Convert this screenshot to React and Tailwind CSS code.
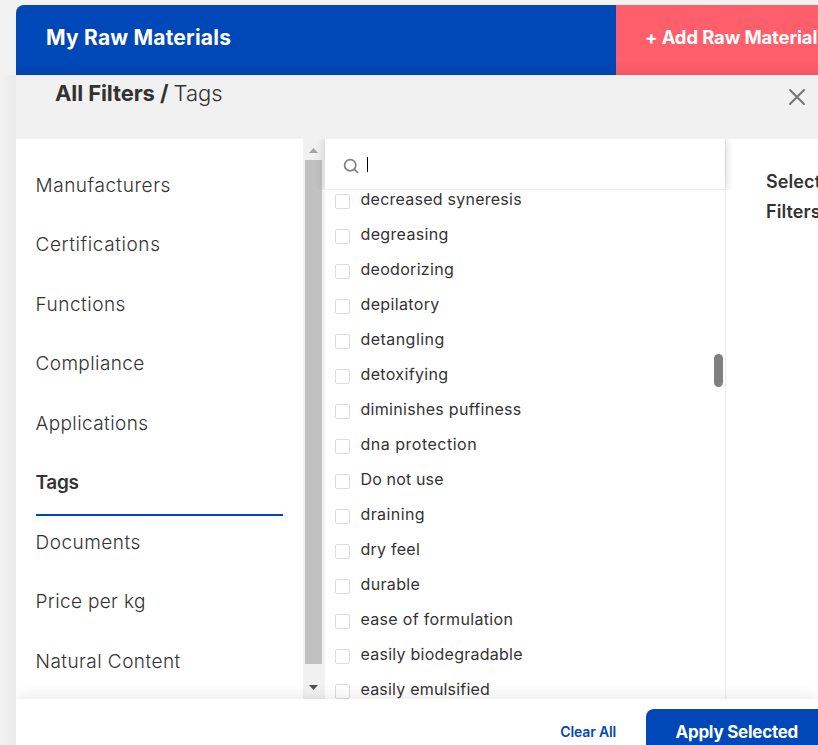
const categories = [
  { name: 'Manufacturers', tracking: 'tracking-[0.55px]' },
  { name: 'Certifications', tracking: 'tracking-[0.6px]' },
  { name: 'Functions', tracking: 'tracking-[0.5px]' },
  { name: 'Compliance', tracking: 'tracking-[0.4px]' },
  { name: 'Applications', tracking: 'tracking-[0.4px]' },
  { name: 'Tags', active: true, tracking: 'tracking-[-0.3px]' },
  { name: 'Documents', tracking: 'tracking-[0.5px]' },
  { name: 'Price per kg', tracking: 'tracking-[0.35px]' },
  { name: 'Natural Content', tracking: 'tracking-[0.45px]' },
];

const tags = [
  { name: 'decreased syneresis', tracking: 'tracking-[0.25px]' },
  { name: 'degreasing', tracking: 'tracking-[0.35px]' },
  { name: 'deodorizing', tracking: 'tracking-[0.3px]' },
  { name: 'depilatory', tracking: 'tracking-[0.35px]' },
  { name: 'detangling', tracking: 'tracking-[0.45px]' },
  { name: 'detoxifying', tracking: 'tracking-[0.35px]' },
  { name: 'diminishes puffiness', tracking: 'tracking-[0.3px]' },
  { name: 'dna protection', tracking: 'tracking-[0.5px]' },
  { name: 'Do not use', tracking: 'tracking-[0.15px]' },
  { name: 'draining', tracking: 'tracking-[0.4px]' },
  { name: 'dry feel', tracking: 'tracking-[0.25px]' },
  { name: 'durable', tracking: 'tracking-[0.35px]' },
  { name: 'ease of formulation', tracking: 'tracking-[0.32px]' },
  { name: 'easily biodegradable', tracking: 'tracking-[0.25px]' },
  { name: 'easily emulsified', tracking: 'tracking-[0.2px]' },
];

function Header() {
  return (
    <header className="flex h-[70px] shrink-0 overflow-hidden rounded-tl-[8px] text-white font-bold">
      <div className="flex w-[600px] shrink-0 items-center bg-[#0047b8] bg-linear-to-b from-transparent from-80% to-black/5 pl-[30px] pb-[5px] text-[21px] tracking-[0.2px] whitespace-nowrap">
        <span>My Raw Materials</span>
      </div>
      <div className="flex grow items-center bg-[#ff5e6b] bg-linear-to-b from-transparent from-80% to-black/5 pl-[29px] pb-[5px] text-[18.5px] tracking-[-0.15px] whitespace-nowrap">
        <span>+ Add Raw Material</span>
      </div>
    </header>
  );
}

function Sidebar() {
  return (
    <nav className="w-[287px] shrink-0 bg-white pt-[19.9px] pl-5">
      {categories.map((c) => (
        <div
          key={c.name}
          className={`h-[59.5px] w-[247px] leading-[53px] text-[19px] whitespace-nowrap ${c.tracking} ${
            c.active ? 'border-b-2 border-[#0047b8] font-semibold -indent-[0.5px]' : '-indent-[0.5px] font-[330]'
          }`}
        >
          <span>{c.name}</span>
        </div>
      ))}
    </nav>
  );
}

function Scrollbar() {
  return (
    <div className="flex w-[22px] shrink-0 flex-col bg-[#f1f1f1]">
      <div className="flex h-[21px] items-center justify-center pr-[1px] pt-[2px]">
        <svg width="9" height="5" viewBox="0 0 9 5"><path d="M4.5 0L9 5H0Z" fill="#a3a3a3" /></svg>
      </div>
      <div className="ml-[2px] h-[504px] w-[17px] bg-[#c1c1c1]" />
      <div className="flex h-[35px] justify-center pr-[1px] pt-[21px]">
        <svg width="9" height="5" viewBox="0 0 9 5"><path d="M0 0H9L4.5 5Z" fill="#505050" /></svg>
      </div>
    </div>
  );
}

function TagPanel() {
  return (
    <section className="relative flex w-[401px] shrink-0 flex-col border-r border-[#eeeeee] bg-white">
      <div className="flex h-[51px] shrink-0 items-start border-b border-[#eeeeee] bg-white pt-[18px] pl-[18px] shadow-[0_0_10px_rgba(0,0,0,0.18)] [clip-path:inset(0_-12px_0_-12px)]">
        <svg className="mt-[1px]" width="16" height="16" viewBox="0 0 16 16" fill="none" stroke="#808080" strokeWidth="1.7">
          <circle cx="7.2" cy="7.2" r="5.6" />
          <path d="M11.2 11.2L15 15" />
        </svg>
        <div className="ml-[8px] h-[15px] w-px bg-black" />
      </div>
      <div className="min-h-0 grow overflow-hidden">
        <div className="-mt-[8px] pl-[10px]">
          {tags.map((t) => (
            <label key={t.name} className="flex h-[35px] items-center">
              <span className="mt-[4px] h-[15px] w-[15px] shrink-0 rounded-[2px] border border-[#dcdcdc] bg-white" />
              <span className={`ml-[10.5px] text-[16px] font-[370] leading-[35px] whitespace-nowrap ${t.tracking}`}>{t.name}</span>
            </label>
          ))}
        </div>
      </div>
      <div className="absolute top-[215px] right-[2px] h-[33px] w-[9px] rounded-full bg-[#808080]" />
    </section>
  );
}

function Footer() {
  return (
    <footer className="relative flex h-[46px] shrink-0 bg-white shadow-[0_0_16px_rgba(0,0,0,0.12)] [clip-path:inset(-16px_0_0_0)]">
      <div className="w-[600px] shrink-0 text-right text-[14px] leading-[66px] font-semibold tracking-[-0.15px] text-[#0047b8]">
        <span>Clear All</span>
      </div>
      <div className="mt-[10px] ml-[30px] h-[60px] grow rounded-tl-[8px] bg-[#0047b8] pl-[29.5px] text-[17px] leading-[46px] font-bold tracking-[-0.25px] whitespace-nowrap text-white">
        <span>Apply Selected</span>
      </div>
    </footer>
  );
}

export default function App() {
  return (
    <div className="flex h-[745px] w-[818px] overflow-hidden bg-[#f2f2f2] pt-[5px] font-['Inter','Liberation_Sans',sans-serif] text-[#333333]">
      <div className="mt-[70px] w-4 shrink-0 bg-linear-to-r from-[#f2f2f2] to-[#ebebeb]" />
      <main className="flex w-[802px] shrink-0 flex-col">
        <Header />
        <div className="flex h-[64px] shrink-0 items-start justify-between bg-[#f1f1f1] pl-[39px] pr-[13px]">
          <h1 className="flex text-[22px] leading-[37px] whitespace-pre">
            <span className="font-bold tracking-[-0.1px]">All Filters / </span>
            <span className="font-[330]">Tags</span>
          </h1>
          <svg className="mt-[14px]" width="16" height="16" viewBox="0 0 16 16" stroke="#757575" strokeWidth="2" strokeLinecap="round">
            <path d="M1 1L15 15M15 1L1 15" />
          </svg>
        </div>
        <div className="flex h-[560px] shrink-0 overflow-hidden bg-white">
          <Sidebar />
          <Scrollbar />
          <TagPanel />
          <aside className="min-w-0 grow overflow-hidden pt-[28px] pl-[40px] text-[18px] leading-[30px] font-semibold">
            <div className="tracking-[0.1px]">Selected</div>
            <div className="tracking-[0.1px]">Filters</div>
          </aside>
        </div>
        <Footer />
      </main>
    </div>
  );
}
